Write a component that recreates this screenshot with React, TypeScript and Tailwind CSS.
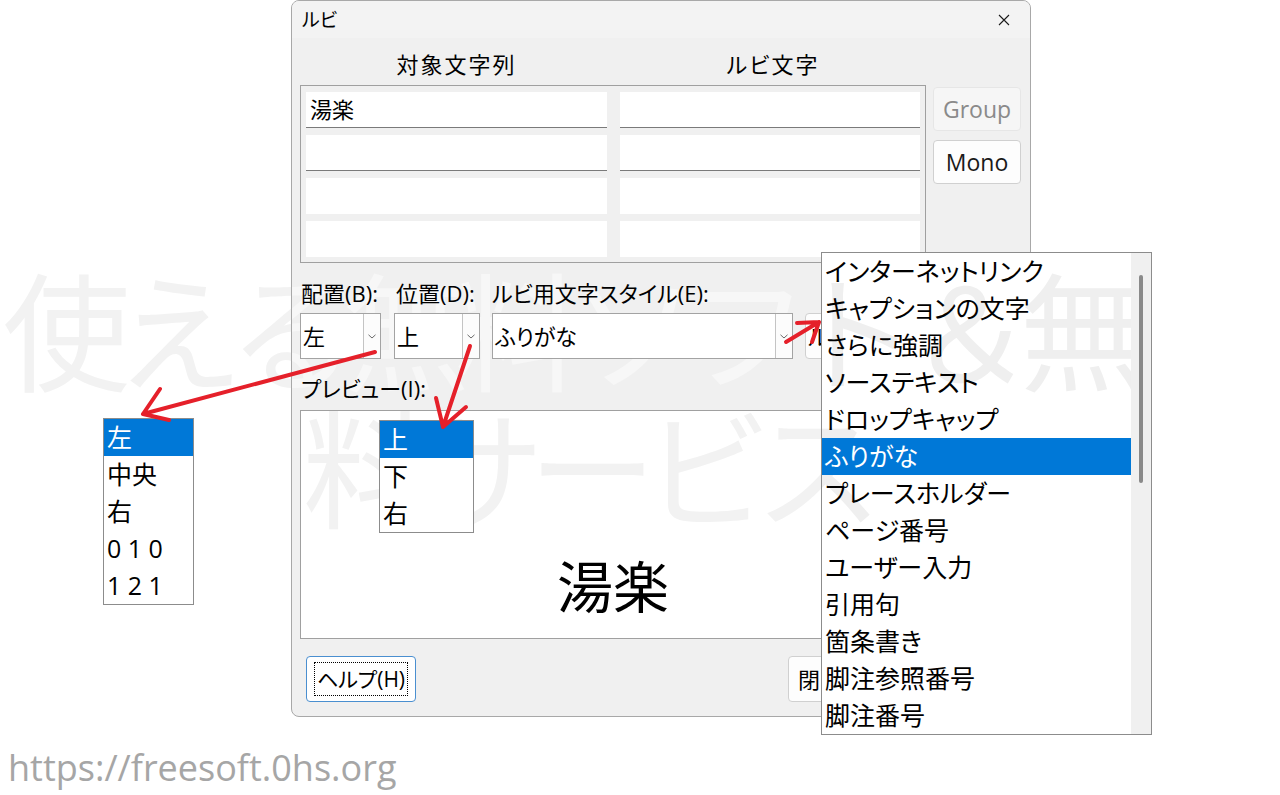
import React from "react";

const UI = "font-['Open_Sans','Noto_Sans_CJK_JP',sans-serif] [font-feature-settings:'palt']";

function WmLine({ text, pos, color }: { text: string; pos: string; color: string }) {
  return (
    <div className={`absolute flex text-[128px] leading-[137px] font-['Noto_Sans_CJK_JP',sans-serif] ${pos} ${color}`}>
      {Array.from(text).map((c, i) => (
        <span key={i} className="flex w-[113px] justify-center whitespace-nowrap">
          {c}
        </span>
      ))}
    </div>
  );
}

function Watermark({ pos, color }: { pos: string; color: string }) {
  return (
    <div aria-hidden className={`pointer-events-none absolute h-[795px] w-[1280px] ${pos}`}>
      <WmLine text="使える無料ソフト＆無" pos="left-[10px] top-[258px]" color={color} />
      <WmLine text="料サービス" pos="left-[310px] top-[395px]" color={color} />
    </div>
  );
}

function Chevron() {
  return (
    <svg width="8" height="5" viewBox="0 0 8 5">
      <path d="M0.5 0.8 L4 4 L7.5 0.8" stroke="#6b6b6b" strokeWidth="1" fill="none" />
    </svg>
  );
}

function Dropdown({ text, w }: { text: string; w: string }) {
  return (
    <div className={`mt-[6px] flex h-[46px] border border-[#a3a3a3] bg-white ${w}`}>
      <div className="flex flex-1 items-center overflow-hidden whitespace-nowrap pl-[2px] text-[22px]">{text}</div>
      <div className="flex w-[17px] items-center justify-center border-l border-[#c4c4c4] bg-[#fcfcfc]">
        <Chevron />
      </div>
    </div>
  );
}

function Cell({ w, line, text }: { w: string; line?: boolean; text?: string }) {
  return (
    <div
      className={`flex h-[36px] items-center bg-white pl-[4px] text-[22px] ${w} ${line ? "border-b border-[#7a7a7a]" : ""}`}
    >
      {text}
    </div>
  );
}

function Dialog() {
  return (
    <div className={`relative ml-[291px] h-[717px] w-[740px] overflow-hidden rounded-[8px] border border-[#a8a8a8] bg-[#f0f0f0] text-black ${UI}`}>
      <Watermark pos="-left-[292px] -top-[1px]" color="text-[#f7f7f7]" />
      <div className="relative flex h-full flex-col">
        {/* title bar */}
        <div className="flex h-[37px] items-center justify-between bg-[#f3f3f3] pl-[10px] pr-[20px]">
          <span className="text-[19px] leading-[24px]">ルビ</span>
          <svg width="12" height="12" viewBox="0 0 12 12">
            <path d="M1 1 L11 11 M11 1 L1 11" stroke="#1a1a1a" strokeWidth="1.1" />
          </svg>
        </div>

        <div className="flex flex-col pl-[8px] pr-[8px]">
          {/* headers */}
          <div className="mt-[12px] flex gap-[13px] pl-[6px] text-[22px] leading-[28px] tracking-[2px]">
            <div className="w-[301px] text-center">対象文字列</div>
            <div className="w-[300px] pl-[6px] text-center">ルビ文字</div>
          </div>

          {/* table + side buttons */}
          <div className="mt-[7px] flex items-start gap-[7px]">
            <div className="flex h-[178px] w-[626px] flex-col gap-[7px] border border-[#a0a0a0] pl-[5px] pr-[5px] pt-[6px]">
              <div className="flex gap-[13px]">
                <Cell w="w-[301px]" line text="湯楽" />
                <Cell w="w-[300px]" line />
              </div>
              <div className="flex gap-[13px]">
                <Cell w="w-[301px]" line />
                <Cell w="w-[300px]" line />
              </div>
              <div className="flex gap-[13px]">
                <Cell w="w-[301px]" />
                <Cell w="w-[300px]" />
              </div>
              <div className="flex gap-[13px]">
                <Cell w="w-[301px]" />
                <Cell w="w-[300px]" />
              </div>
            </div>
            <div className="flex flex-col gap-[9px] pt-[2px]">
              <div className="flex h-[44px] w-[88px] items-center justify-center rounded-[4px] border border-[#e6e6e6] bg-[#f6f6f6] text-[23px] text-[#8a8a8a]">
                Group
              </div>
              <div className="flex h-[44px] w-[88px] items-center justify-center rounded-[4px] border border-[#d0d0d0] bg-[#fdfdfd] text-[23px] text-[#1a1a1a]">
                Mono
              </div>
            </div>
          </div>

          {/* labels + dropdowns */}
          <div className="mt-[16px] flex">
            <div className="flex w-[81px] flex-col">
              <div className="whitespace-nowrap pl-[1px] text-[22px] leading-[28px]">配置(B):</div>
              <Dropdown text="左" w="w-[81px]" />
            </div>
            <div className="ml-[13px] flex w-[86px] flex-col">
              <div className="whitespace-nowrap pl-[2px] text-[22px] leading-[28px]">位置(D):</div>
              <Dropdown text="上" w="w-[86px]" />
            </div>
            <div className="ml-[12px] flex w-[301px] flex-col">
              <div className="whitespace-nowrap text-[22px] leading-[28px]">ルビ用文字スタイル(E):</div>
              <Dropdown text="ふりがな" w="w-[301px]" />
            </div>
            <div className="ml-[12px] flex w-[120px] flex-col">
              <div className="text-[22px] leading-[28px]">&nbsp;</div>
              <div className="mt-[6px] flex h-[46px] w-[120px] items-center rounded-[4px] border border-[#d0d0d0] bg-[#fdfdfd] pl-[2px] text-[22px]">
                ルビ
              </div>
            </div>
          </div>

          {/* preview */}
          <div className="mt-[15px] pl-[1px] text-[22px] leading-[28px]">プレビュー(I):</div>
          <div className="relative mt-[8px] flex h-[229px] w-[626px] items-center justify-center overflow-hidden border border-[#a0a0a0] bg-white pt-[118px]">
            <Watermark pos="-left-[301px] -top-[411px]" color="text-[#f2f2f2]" />
            <span className="relative text-[56px] leading-[64px] font-['Noto_Sans_CJK_JP',sans-serif]">湯楽</span>
          </div>

          {/* bottom buttons */}
          <div className="mt-[17px] flex">
            <div className="ml-[6px] flex h-[46px] w-[110px] rounded-[4px] border border-[#4a8fd0] bg-white px-[7px] py-[5px]">
              <div className="flex flex-1 items-center justify-center whitespace-nowrap border border-dotted border-black text-[21px] leading-[24px]">
                ヘルプ(H)
              </div>
            </div>
            <div className="ml-[372px] flex h-[46px] w-[110px] items-center whitespace-nowrap rounded-[4px] border border-[#d0d0d0] bg-[#fdfdfd] pl-[9px] text-[22px]">
              閉じる(C)
            </div>
            <div className="ml-[7px] flex h-[46px] w-[110px] items-center justify-center whitespace-nowrap rounded-[4px] border border-[#d0d0d0] bg-[#fdfdfd] text-[22px]">
              適用(A)
            </div>
          </div>
        </div>
      </div>
    </div>
  );
}

function ListRow({ text, sel }: { text: string; sel?: boolean }) {
  return (
    <div
      className={`relative h-[37px] whitespace-nowrap pl-[3px] text-[25px] leading-[37px] ${sel ? "bg-[#0078d7] text-white" : "text-black"}`}
    >
      {text}
    </div>
  );
}

const styles = [
  "インターネットリンク",
  "キャプションの文字",
  "さらに強調",
  "ソーステキスト",
  "ドロップキャップ",
  "ふりがな",
  "プレースホルダー",
  "ページ番号",
  "ユーザー入力",
  "引用句",
  "箇条書き",
  "脚注参照番号",
  "脚注番号",
];

export default function App() {
  return (
    <div className="relative h-[795px] w-[1280px] overflow-hidden bg-white">
      <Watermark pos="left-0 top-0" color="text-[#f2f2f2]" />

      <div className="relative flex flex-col">
        <Dialog />
        <div className="ml-[8px] mt-[33px] text-[36px] leading-[36px] text-[#a6a6a6] font-['Open_Sans',sans-serif]">
          https://freesoft.0hs.org
        </div>
      </div>

      {/* 配置 popup */}
      <div className={`absolute left-[103px] top-[418px] w-[91px] border border-[#8c8c8c] bg-white ${UI}`}>
        <ListRow text="左" sel />
        <ListRow text="中央" />
        <ListRow text="右" />
        <ListRow text="0 1 0" />
        <ListRow text="1 2 1" />
      </div>

      {/* 位置 popup */}
      <div className={`absolute left-[379px] top-[420px] w-[95px] border border-[#8c8c8c] bg-white ${UI}`}>
        <ListRow text="上" sel />
        <ListRow text="下" />
        <ListRow text="右" />
      </div>

      {/* style popup */}
      <div className={`absolute left-[821px] top-[252px] flex h-[483px] w-[331px] overflow-hidden border border-[#8c8c8c] bg-white ${UI}`}>
        <Watermark pos="-left-[822px] -top-[253px]" color="text-[#efefef]" />
        <div className="relative flex w-[309px] flex-col">
          {styles.map((s) => (
            <ListRow key={s} text={s} sel={s === "ふりがな"} />
          ))}
        </div>
        <div className="relative w-[20px] bg-[#f0f0f0]">
          <div className="absolute left-[8px] top-[22px] h-[208px] w-[4px] rounded-full bg-[#8a8a8a]" />
        </div>
      </div>

      {/* red arrows */}
      <svg className="pointer-events-none absolute left-0 top-0" width="1280" height="795">
        <g stroke="#e5202a" strokeWidth="4" strokeLinecap="round" strokeLinejoin="round" fill="none">
          <path d="M375 352 L143 414 M143 414 L160 389 M143 414 L169 420" />
          <path d="M470 346 L443 427 M443 427 L436 398 M443 427 L466 407" />
          <path d="M786 342 L819 322 M819 322 L797 323 M819 322 L812 342" />
        </g>
      </svg>
    </div>
  );
}
